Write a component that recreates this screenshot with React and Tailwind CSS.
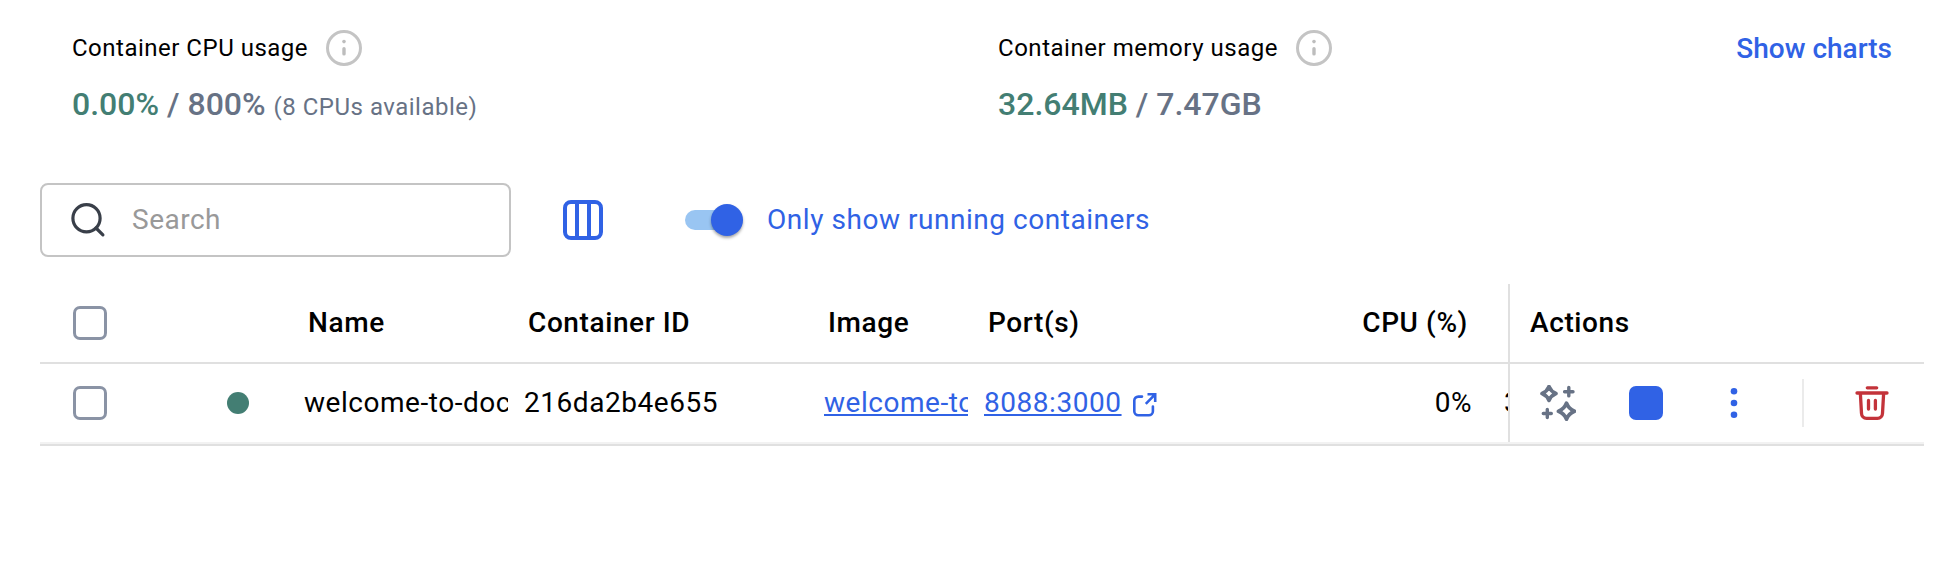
import React from "react";

const InfoIcon = () => (
  <svg className="size-9 shrink-0" viewBox="0 0 36 36" fill="none">
    <circle cx="18" cy="18" r="16.5" stroke="#c4c4c4" strokeWidth="3" />
    <circle cx="18" cy="11.6" r="1.8" fill="#bdbdbd" />
    <path d="M18 18.700v5.200" stroke="#bdbdbd" strokeWidth="3.4" strokeLinecap="round" />
  </svg>
);

const SearchIcon = () => (
  <svg className="size-[36px] shrink-0" viewBox="0 0 36 36" fill="none" stroke="#393f49" strokeWidth="3.2">
    <circle cx="16.5" cy="16.2" r="13.6" />
    <path d="M26 26l6.900 6.900" strokeLinecap="round" />
  </svg>
);

const ColumnsIcon = () => (
  <svg className="size-10 shrink-0" viewBox="0 0 40 40" fill="none" stroke="#3062e5" strokeWidth="4">
    <rect x="2" y="2" width="36" height="36" rx="6" />
    <path d="M14 2v36M26 2v36" />
  </svg>
);

const ExternalIcon = () => (
  <svg className="h-7 w-[25px] shrink-0" viewBox="0 0 25 28" fill="none" stroke="#3062e5" strokeWidth="2.6">
    <path d="M10 7.600H6.300a4 4 0 0 0-4 4V22.200a4 4 0 0 0 4 4h10.600a4 4 0 0 0 4-4V17.500" strokeLinecap="round" />
    <path d="M15.500 5.300H23.200V13M22.600 5.900L13.800 14.800" />
  </svg>
);

const SparklesIcon = () => (
  <svg className="h-9 w-9 shrink-0" viewBox="0 0 36 36" fill="none" stroke="#677285" strokeWidth="3.8" strokeLinejoin="round">
    <path d="M9 1.600Q11 6.500 15.900 8.500Q11 10.500 9 15.400Q7 10.500 2.100 8.500Q7 6.500 9 1.600Z" />
    <path d="M26.500 18.200Q28.700 24 34.500 26.200Q28.700 28.400 26.500 34.200Q24.300 28.400 18.500 26.200Q24.300 24 26.500 18.200Z" />
    <path d="M28.800 2.500v8.400M24.600 6.700h8.400M7.300 24.500v8M3.300 28.500h8" strokeLinecap="round" strokeWidth="3.400" />
  </svg>
);

const MoreIcon = () => (
  <svg className="h-8 w-2 shrink-0" viewBox="0 0 8 32" fill="#3062e5">
    <circle cx="4" cy="4.300" r="3.300" />
    <circle cx="4" cy="16" r="3.300" />
    <circle cx="4" cy="27.700" r="3.300" />
  </svg>
);

const TrashIcon = () => (
  <svg className="h-[34px] w-[34px] shrink-0" viewBox="0 0 34 34" fill="none" stroke="#c3333a" strokeWidth="3.3" strokeLinecap="round">
    <path d="M12.300 1.800h9.400M2 7h30" />
    <path d="M5.400 8l1.100 19.300a5 5 0 0 0 5 5h11a5 5 0 0 0 5-5l1.100-19.300" />
    <path d="M13.500 14.400v8.600M20.400 14.400v8.600" />
  </svg>
);

const Checkbox = () => <div className="size-[34px] shrink-0 rounded-[7px] border-[3.5px] border-[#8a93a5]" />;

export default function App() {
  return (
    <main className="flex h-[578px] w-[1956px] flex-col overflow-hidden bg-white pl-10 pr-8 font-['Roboto',sans-serif] text-black">
      <section className="flex h-[183px] shrink-0 pl-8 pt-[30px]">
        <div className="w-[926px]">
          <div className="flex h-9 items-center gap-[18px]">
            <span className="whitespace-nowrap text-2xl tracking-[0.5px]">Container CPU usage</span>
            <InfoIcon />
          </div>
          <div className="mt-[17px] flex items-baseline whitespace-nowrap text-[32px] leading-[42px] font-medium text-[#677285]">
            <span className="text-[#437e73]">0.00%</span>
            <span className="ml-[8px]">/ 800%</span>
            <span className="ml-[8px] text-2xl font-normal tracking-[0.5px]">(8 CPUs available)</span>
          </div>
        </div>
        <div className="flex-1">
          <div className="flex h-9 items-center gap-[18px]">
            <span className="whitespace-nowrap text-2xl tracking-[0.53px]">Container memory usage</span>
            <InfoIcon />
          </div>
          <div className="mt-[17px] flex items-baseline whitespace-nowrap text-[32px] leading-[42px] font-medium text-[#677285]">
            <span className="text-[#437e73]">32.64MB</span>
            <span className="ml-[8px]">/ 7.47GB</span>
          </div>
        </div>
        <button className="mr-[32px] h-[38px] whitespace-nowrap text-[28px] leading-[38px] font-medium text-[#3062e5]">Show charts</button>
      </section>

      <section className="flex h-[74px] shrink-0 items-center">
        <div className="flex h-[74px] w-[471px] items-center rounded-lg border-2 border-[#c4c4c4] pl-7">
          <SearchIcon />
          <span className="ml-[26px] text-[28px] tracking-[0.5px] text-[#999999]">Search</span>
        </div>
        <div className="ml-[52px]">
          <ColumnsIcon />
        </div>
        <div className="ml-[82px] flex h-8 w-[58px] items-center">
          <div className="h-5 w-[52px] shrink-0 rounded-full bg-[#99c5f2]" />
          <div className="-ml-[26px] size-8 shrink-0 rounded-full bg-[#3062e5] shadow-[0_2px_3px_rgba(0,0,0,0.35)]" />
        </div>
        <span className="ml-[24px] whitespace-nowrap text-[28px] tracking-[0.54px] text-[#3062e5]">Only show running containers</span>
      </section>

      <section className="mt-[27px] flex w-[1884px] shrink-0 flex-col text-[28px]">
        <div className="flex h-[80px] border-b-2 border-[#e0e0e0] font-medium tracking-[0.6px]">
          <div className="flex w-[268px] items-center pl-[33px]"><Checkbox /></div>
          <div className="flex w-[220px] items-center">Name</div>
          <div className="flex w-[300px] items-center">Container ID</div>
          <div className="flex w-[160px] items-center">Image</div>
          <div className="flex w-[150px] items-center">Port(s)</div>
          <div className="flex w-[370px] items-center justify-end pr-[40px]">CPU (%)</div>
          <div className="flex flex-1 items-center border-l-2 border-[#e0e0e0] pl-5">Actions</div>
        </div>
        <div className="flex h-[80px] border-b-2 border-[#f2f2f2] tracking-[0.54px]">
          <div className="flex w-[187px] items-center pl-[33px]"><Checkbox /></div>
          <div className="flex w-[77px] items-center"><div className="size-[22px] rounded-full bg-[#437e73]" /></div>
          <div className="flex w-[204px] items-center overflow-hidden whitespace-nowrap">welcome-to-docker</div>
          <div className="flex w-[300px] items-center pl-4">216da2b4e655</div>
          <div className="ml-4 flex w-[144px] items-center overflow-hidden whitespace-nowrap text-[#3062e5]">
            <span className="underline decoration-2 underline-offset-[2px]">welcome-to-docker</span>
          </div>
          <div className="ml-4 flex w-[300px] items-center text-[#3062e5]">
            <span className="mr-[10px] underline decoration-2 underline-offset-[2px]">8088:3000</span>
            <ExternalIcon />
          </div>
          <div className="flex w-[188px] items-center justify-end">0%</div>
          <div className="flex w-[36px] items-center overflow-hidden whitespace-nowrap pl-8">32.64MB</div>
          <div className="flex flex-1 items-center border-l-2 border-[#e0e0e0] pl-[30px]">
            <SparklesIcon />
            <div className="ml-[53px] size-[34px] rounded-[7px] bg-[#3062e5]" />
            <div className="ml-[67px]"><MoreIcon /></div>
            <div className="ml-[64px] h-12 w-0.5 bg-[#ebebeb]" />
            <div className="ml-[51px]"><TrashIcon /></div>
          </div>
        </div>
        <div className="h-0.5 bg-[#e0e0e0]" />
      </section>
    </main>
  );
}
